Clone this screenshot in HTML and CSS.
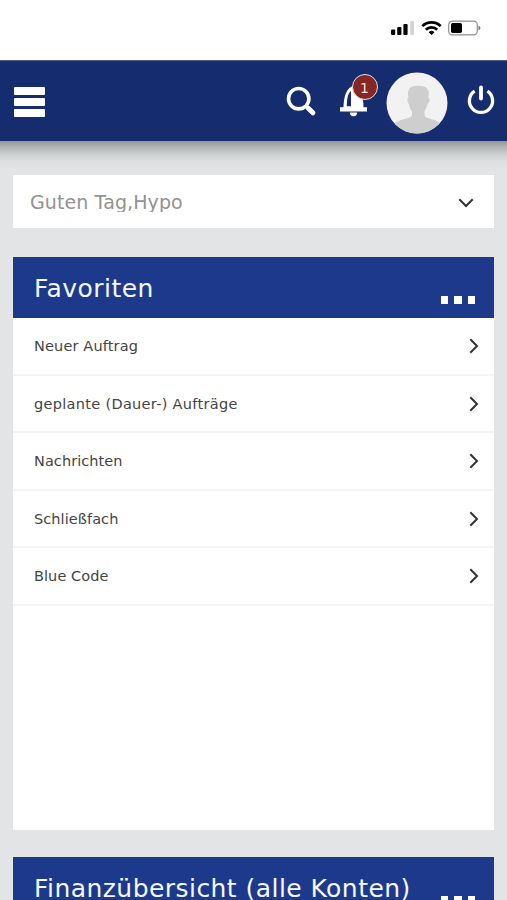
FILE: index.html
```html
<!DOCTYPE html>
<html lang="de">
<head>
<meta charset="utf-8">
<title>Favoriten</title>
<link rel="stylesheet" href="styles.css">
</head>
<body>
<div class="status">
  <svg class="status-icons" width="96" height="20" viewBox="0 0 96 20">
    <rect x="1" y="11.5" width="4.2" height="5.5" rx="1"/>
    <rect x="7.2" y="9" width="4.2" height="8" rx="1"/>
    <rect x="13.4" y="6" width="4.2" height="11" rx="1"/>
    <rect x="20.2" y="3" width="3.8" height="14" rx="1" fill="#d4d4d4"/>
    <g fill="none" stroke="#000" stroke-width="2.7">
      <path d="M32.3 8.1a13 13 0 0 1 18.4 0"/>
      <path d="M35.8 11.7a8 8 0 0 1 11.4 0"/>
    </g>
    <path d="M38.6 14.2a4.2 4.2 0 0 1 5.8 0L41.500 17z"/>
    <rect x="58.7" y="3.2" width="28.6" height="13.6" rx="3.6" fill="#fff" stroke="#8e8e8e" stroke-width="1.2"/>
    <rect x="61" y="5.1" width="11" height="9.8" rx="1.6"/>
    <path d="M88.500 7.500q4 2.500 0 5z" fill="#777"/>
  </svg>
</div>
<header class="bar">
  <div class="menu"><i></i><i></i><i></i></div>
  <svg class="search" width="32" height="32" viewBox="0 0 32 32" fill="none" stroke="#fff">
    <circle cx="12.700" cy="12.700" r="10.200" stroke-width="3.600"/>
    <path d="M19.800 19.800l3.200 3.200" stroke-width="3.400"/>
    <path d="M22.300 22.300l4.600 4.500" stroke-width="5" stroke-linecap="round"/>
  </svg>
  <div class="bell">
    <svg width="28" height="36" viewBox="0 0 28 36" fill="#fff">
      <path d="M0 26.300H3.500C3.800 16 6 7 13.700 4.500C21 6.500 23.500 16 23.500 26.300H27V30.500H0z"/>
      <path d="M9.800 31.500h7.400a3.700 3.700 0 0 1-7.400 0z"/>
      <path d="M6.800 25.300C6.800 17 8 12.500 11 10V25.300z" fill="#152c6e"/>
    </svg>
    <span class="badge">1</span>
  </div>
  <svg class="avatar" width="62" height="62" viewBox="0 0 62 62">
    <defs><clipPath id="face"><circle cx="31" cy="31" r="30.500"/></clipPath></defs>
    <circle cx="31" cy="31" r="30.500" fill="#f2f2f2"/>
    <path clip-path="url(#face)" fill="#cecece" d="M22.500 26C21 17 23 13.800 32 13.800S44 17 42.500 26C44.500 26 43.500 31.500 41.500 32C41 36 38.800 38 38.500 39.500V43.500C39.500 47 50 47 54 51V62H9V51C13 47 25 47 26 43.500V39.500C25 38 23.500 36 23 32C21.500 31.500 20.500 26 22.500 26z"/>
  </svg>
  <svg class="power" width="28" height="30" viewBox="0 0 28 30" fill="none" stroke="#fff" stroke-width="3.300">
    <path d="M7.600 6.200A11.600 11.600 0 1 0 20.400 6.200"/>
    <path d="M14 2.500v11" stroke-width="3.800" stroke-linecap="round"/>
  </svg>
</header>
<main class="content">
  <div class="greeting">
    <span class="greeting-text">Guten Tag,Hypo</span>
    <svg width="16" height="10" viewBox="0 0 16 10"><path d="M1.300 1.300L8 8L14.700 1.300"/></svg>
  </div>
  <section class="card favorites">
    <div class="card-head"><h2>Favoriten</h2><div class="dots"><i></i><i></i><i></i></div></div>
    <ul>
      <li><span class="narrow">Neuer Auftrag</span><svg width="10" height="16" viewBox="0 0 10 16"><path d="M1.300 1.300L8 8L1.300 14.700"/></svg></li>
      <li><span class="wide">geplante (Dauer-) Aufträge</span><svg width="10" height="16" viewBox="0 0 10 16"><path d="M1.300 1.300L8 8L1.300 14.700"/></svg></li>
      <li><span>Nachrichten</span><svg width="10" height="16" viewBox="0 0 10 16"><path d="M1.300 1.300L8 8L1.300 14.700"/></svg></li>
      <li><span>Schließfach</span><svg width="10" height="16" viewBox="0 0 10 16"><path d="M1.300 1.300L8 8L1.300 14.700"/></svg></li>
      <li><span>Blue Code</span><svg width="10" height="16" viewBox="0 0 10 16"><path d="M1.300 1.300L8 8L1.300 14.700"/></svg></li>
    </ul>
  </section>
  <section class="card">
    <div class="card-head"><h2>Finanzübersicht (alle Konten)</h2><div class="dots"><i></i><i></i><i></i></div></div>
  </section>
</main>
</body>
</html>
```

FILE: styles.css
```css
* { box-sizing: border-box; }
html, body { height: 100%; overflow: hidden; }
body {
  margin: 0;
  background: #e3e4e6;
  font-family: "DejaVu Sans", Verdana, sans-serif;
}
.status {
  height: 60px;
  background: #fff;
  display: flex;
  justify-content: flex-end;
  padding: 18px 21px 0 0;
}
.bar {
  height: 81px;
  background: #152c6e;
  display: flex;
  align-items: flex-start;
  border-top: 1px solid #50618f;
}
.menu {
  margin: 25.500px 0 0 14px;
  width: 30.500px;
  display: grid;
  gap: 3px;
}
.menu i { height: 8px; background: #fff; border-radius: 1px; }
.search { margin: 25px 0 0 241.500px; }
.bell { position: relative; margin: 20px 0 0 21.500px; width: 28px; height: 36px; }
.badge {
  position: absolute;
  left: 12px;
  top: -7px;
  width: 26px;
  height: 26px;
  border: 1px solid #e9dadd;
  border-radius: 50%;
  background: #852824;
  color: #f3dddd;
  font-size: 14px;
  line-height: 26px;
  text-align: center;
}
.avatar { margin: 11px 0 0 18px; }
.power { margin: 24px 0 0 19px; }
.content {
  height: 759px;
  padding: 34px 13px 0;
  overflow: hidden;
  background: linear-gradient(#929698 0, #b2b5b6 6px, #cdcfd0 14px, #dcdedf 20px, #e3e4e6 27px);
}
.greeting {
  height: 53px;
  background: #fff;
  display: flex;
  align-items: center;
  justify-content: space-between;
  padding: 2px 20px 0 17px;
}
.greeting-text {
  height: 20px;
  line-height: 20px;
  margin-top: -2px;
  overflow: hidden;
  white-space: nowrap;
  font-size: 19px;
  letter-spacing: 0.100px;
  color: #929292;
}
.greeting svg, li svg { fill: none; stroke: #333; stroke-width: 2; }
.card { background: #fff; margin-top: 27px; }
.favorites { height: 573px; margin-top: 29px; }
.card-head {
  height: 61px;
  background: #1d398b;
  color: #f5f8ff;
  display: flex;
  justify-content: space-between;
  padding: 0 19px 0 21px;
}
h2 {
  margin: 0;
  font-size: 25px;
  font-weight: 400;
  line-height: 64px;
  letter-spacing: 0.450px;
  white-space: nowrap;
}
.dots { display: flex; gap: 6px; padding-top: 39px; }
.dots i { width: 7.500px; height: 7.500px; background: #fff; }
ul { list-style: none; margin: 0; padding: 0; }
li {
  height: 57.500px;
  border-bottom: 2px solid #f3f4f5;
  display: flex;
  align-items: center;
  justify-content: space-between;
  padding: 1px 15px 0 21px;
  font-size: 14.500px;
  letter-spacing: 0.070px;
  color: #444;
}
.narrow { letter-spacing: 0.150px; }
.wide { letter-spacing: 0.310px; }
```
